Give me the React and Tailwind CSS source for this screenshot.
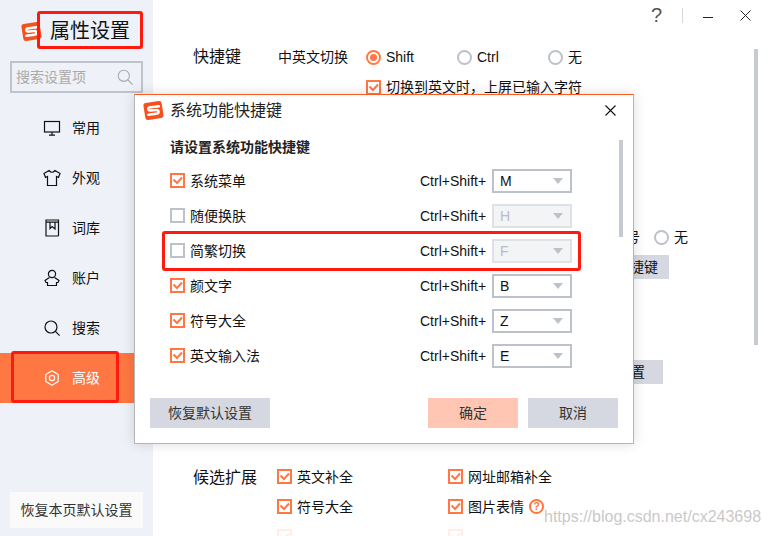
import React from 'react';

const NAV = [
  { label: '常用', icon: 'monitor' },
  { label: '外观', icon: 'shirt' },
  { label: '词库', icon: 'book' },
  { label: '账户', icon: 'user' },
  { label: '搜索', icon: 'search' },
  { label: '高级', icon: 'gear', active: true },
];

const SHORTCUTS = [
  { label: '系统菜单', key: 'M', on: true },
  { label: '随便换肤', key: 'H', on: false },
  { label: '简繁切换', key: 'F', on: false },
  { label: '颜文字', key: 'B', on: true },
  { label: '符号大全', key: 'Z', on: true },
  { label: '英文输入法', key: 'E', on: true },
];

const Logo = ({ className }) => (
  <svg viewBox="0 0 22 22" className={className}>
    <rect x="2.2" y="2.8" width="17.6" height="16.4" rx="2.6" transform="rotate(-9 11 11)" fill="#f4511e" />
    <path
      d="M16.2 7 L8.2 7.9 Q5.9 8.2 6 9.7 Q6.1 11.2 8.2 11 L13.2 10.6 Q15.8 10.5 15.9 12.2 Q16 13.8 13.7 14.1 L5.9 15"
      fill="none"
      stroke="#fff"
      strokeWidth="2.3"
      strokeLinecap="round"
    />
  </svg>
);

const NavIcon = ({ name, color }) => {
  const common = { fill: 'none', stroke: color, strokeWidth: 1.2 };
  return (
    <svg viewBox="0 0 18 18" className="w-[18px] h-[18px]" {...common}>
      {name === 'monitor' && (
        <>
          <rect x="1.5" y="2.5" width="15" height="10.5" />
          <path d="M9 13v3M6 16.2h6" />
        </>
      )}
      {name === 'shirt' && (
        <path d="M6 1.5 L1 4.5 L2.5 8.5 L4.5 7.5 V16.5 H13.5 V7.5 L15.5 8.5 L17 4.5 L12 1.5 Q9 5 6 1.5 Z" />
      )}
      {name === 'book' && (
        <>
          <path d="M15.5 17 H3 V1 H15.5 V17" />
          <path d="M3 3.2 H15.5 M7 3.2 V9.5 L9 7.5 L12 10 V3.2" />
        </>
      )}
      {name === 'user' && (
        <>
          <circle cx="9" cy="5" r="3.6" />
          <path d="M6.4 8.4 L2 11.5 L3 13.5 H4.5 V16.5 H13.5 V13.5 H15 L16 11.5 L11.6 8.4" />
        </>
      )}
      {name === 'search' && (
        <>
          <circle cx="8" cy="8" r="6" />
          <path d="M12.4 12.4 L16.6 16.6" />
        </>
      )}
      {name === 'gear' && (
        <>
          <path d="M9 1.8 L15.2 5.4 V12.6 L9 16.2 L2.8 12.6 V5.4 Z" strokeLinejoin="round" />
          <circle cx="9" cy="9" r="2.6" />
        </>
      )}
    </svg>
  );
};

const Check = ({ on, faded }) => (
  <span
    className={`inline-flex w-[15px] h-[15px] shrink-0 items-center justify-center border-2 ${
      on ? 'border-[#ff7743]' : 'border-[#bdc1c9]'
    } ${faded ? 'opacity-[0.12]' : ''}`}
  >
    {on && (
      <svg viewBox="0 0 11 11" className="w-[11px] h-[11px]">
        <path d="M1.5 4.5 L5 8 L10 2.5" fill="none" stroke="#ff7743" strokeWidth="2" />
      </svg>
    )}
  </span>
);

const Radio = ({ on }) => (
  <span
    className={`inline-flex w-[15px] h-[15px] shrink-0 items-center justify-center rounded-full border-2 ${
      on ? 'border-[#ff7743]' : 'border-[#bdc1c9]'
    }`}
  >
    {on && <span className="w-[7px] h-[7px] rounded-full bg-[#ff7743]" />}
  </span>
);

const ShortcutRow = ({ label, shortcut, on }) => (
  <div className="h-[35px] flex items-center text-sm text-[#111]">
    <Check on={on} />
    <span className="ml-[5px] w-[230px]">{label}</span>
    <span className="w-[72px]">Ctrl+Shift+</span>
    <div
      className={`w-20 h-6 flex items-center justify-between pl-[6px] pr-[7px] border-2 ${
        on ? 'border-[#bdc1c9] text-[#111]' : 'border-[#dfe1e5] bg-[#f3f4f6] text-[#b8bcc4]'
      }`}
    >
      <span>{shortcut}</span>
      <span className="w-0 h-0 border-x-[5.5px] border-x-transparent border-t-[6px] border-t-[#bdc1c9]" />
    </div>
  </div>
);

const Dialog = () => (
  <div className="absolute left-[134px] top-[94px] w-[500px] h-[350px] flex flex-col bg-white border border-[#b5b5b8] border-t-[#ff5a1f] shadow-[0_0_12px_rgba(0,0,0,0.14)]">
    <div className="h-[31px] flex items-center pl-[7px] pr-[17px]">
      <Logo className="w-[23px] h-[23px]" />
      <span className="ml-[5px] text-base text-[#222]">系统功能快捷键</span>
      <svg viewBox="0 0 11 11" className="ml-auto w-[11px] h-[11px]">
        <path d="M0.5 0.5 L10.5 10.5 M10.5 0.5 L0.5 10.5" stroke="#111" strokeWidth="1.1" />
      </svg>
    </div>
    <div className="relative flex-1 pl-[35px]">
      <div className="mt-[11px] h-5 leading-5 text-sm font-bold text-[#222]">请设置系统功能快捷键</div>
      <div className="mt-[6px]">
        {SHORTCUTS.map((s) => (
          <ShortcutRow key={s.label} label={s.label} shortcut={s.key} on={s.on} />
        ))}
      </div>
      <div className="absolute left-[484px] top-[14px] w-1 h-[97px] bg-[#c8cad2]" />
    </div>
    <div className="h-[45px] flex pl-[15px] pr-[15px] text-sm text-[#333]">
      <button className="w-[120px] h-[30px] bg-[#d5d8e0]">恢复默认设置</button>
      <button className="ml-auto w-[90px] h-[30px] bg-[#ffc7b3]">确定</button>
      <button className="ml-[10px] w-[90px] h-[30px] bg-[#d5d8e0]">取消</button>
    </div>
  </div>
);

export default function App() {
  return (
    <div className="relative w-[768px] h-[536px] overflow-hidden flex bg-white font-['Liberation_Sans','Noto_Sans_CJK_SC',sans-serif] text-[#111]">
      {/* sidebar */}
      <aside className="w-[153px] h-full flex flex-col bg-[#eef1f7]">
        <div className="h-[38px] mt-[12px] flex items-center pl-[20px]">
          <Logo className="w-[23px] h-[23px]" />
          <span className="ml-[7px] text-xl text-[#111]">属性设置</span>
        </div>
        <div className="mx-[10px] mt-[11px] h-8 flex items-center justify-between pl-[4px] pr-2 border-2 border-[#bfc3cc] text-sm text-[#aaa]">
          <span>搜索设置项</span>
          <svg viewBox="0 0 16 16" className="w-4 h-4" fill="none" stroke="#aaa" strokeWidth="1.1">
            <circle cx="6.8" cy="6.8" r="5.6" />
            <path d="M10.8 10.8 L15.5 15.5" />
          </svg>
        </div>
        <nav className="mt-[10px]">
          {NAV.map((n) => (
            <div
              key={n.label}
              className={`h-[50px] flex items-center pl-[43px] text-sm ${
                n.active ? 'bg-[#ff7743] text-white' : 'text-[#111]'
              }`}
            >
              <NavIcon name={n.icon} color={n.active ? '#fff' : '#111'} />
              <span className="ml-[11px]">{n.label}</span>
            </div>
          ))}
        </nav>
        <button className="mx-[10px] mt-auto mb-2 h-9 bg-[#fafafa] text-sm text-[#333]">恢复本页默认设置</button>
      </aside>

      {/* settings page behind the dialog */}
      <main className="flex-1 h-full overflow-hidden flex flex-col pl-10 text-sm">
        <div className="shrink-0 h-[30px] flex items-center justify-end pr-[17px]">
          <span className="text-xl text-[#555]">?</span>
          <span className="ml-[20px] w-px h-[15px] bg-[#d5d8e0]" />
          <span className="ml-[20px] w-[10px] h-px mt-1 bg-[#222]" />
          <svg viewBox="0 0 11 11" className="ml-[27px] w-[11px] h-[11px]">
            <path d="M0.5 0.5 L10.5 10.5 M10.5 0.5 L0.5 10.5" stroke="#222" strokeWidth="1" />
          </svg>
        </div>
        <div className="shrink-0 mt-[17px] h-5 flex items-center">
          <span className="w-[85px] text-base">快捷键</span>
          <span className="w-[88px]">中英文切换</span>
          <div className="w-[91px] flex items-center gap-[5px]"><Radio on />Shift</div>
          <div className="w-[91px] flex items-center gap-[5px]"><Radio />Ctrl</div>
          <div className="flex items-center gap-[5px]"><Radio />无</div>
        </div>
        <div className="shrink-0 mt-[10px] ml-[173px] flex items-center gap-[5px]">
          <Check on />
          切换到英文时，上屏已输入字符
        </div>
        <div className="shrink-0 mt-[130px] h-5 flex items-center justify-end pr-[80px]">
          <span>符号</span>
          <span className="ml-[14px] mr-[5px] flex"><Radio /></span>
          无
        </div>
        <button className="shrink-0 mt-2 ml-[356px] w-[120px] h-6 bg-[#d5d8e0] text-right pr-[11px]">系统功能快捷键</button>
        <button className="shrink-0 mt-[81px] ml-[356px] w-[114px] h-6 bg-[#d5d8e0] text-right pr-[18px]">自定义设置</button>
        <div className="shrink-0 mt-[85px] flex">
          <span className="w-[84px] text-base leading-[18px]">候选扩展</span>
          <div className="w-[171px] flex flex-col gap-[15px]">
            <div className="flex items-center gap-[5px] h-[15px]"><Check on />英文补全</div>
            <div className="flex items-center gap-[5px] h-[15px]"><Check on />符号大全</div>
            <Check on faded />
          </div>
          <div className="flex flex-col gap-[15px]">
            <div className="flex items-center gap-[5px] h-[15px]"><Check on />网址邮箱补全</div>
            <div className="flex items-center gap-[5px] h-[15px]">
              <Check on />
              图片表情
              <span className="w-[15px] h-[15px] rounded-full border-2 border-[#ff7743] text-[#ff7743] text-[11px] font-bold leading-[11px] text-center">?</span>
            </div>
            <Check on faded />
          </div>
        </div>
      </main>

      {/* main page scrollbar */}
      <div className="absolute left-[754px] top-[49px] w-1 h-[296px] bg-[#c8cad2]" />

      <Dialog />

      {/* red annotation boxes */}
      <div className="absolute left-[37px] top-[11px] w-[106px] h-[38px] border-[3px] border-[#ff1a0f] rounded-[3px] bg-[#eef1f7]/0" />
      <div className="absolute left-[11px] top-[351px] w-[108px] h-[52px] border-[3px] border-[#ff1a0f] rounded-[3px]" />
      <div className="absolute left-[162px] top-[231px] w-[419px] h-[40px] border-[3px] border-[#ff1a0f] rounded-[3px]" />

      {/* watermark */}
      <div className="absolute left-[544px] top-[506px] text-base leading-[22px] text-[#c9c9c9] [text-shadow:0_0_2px_#fff]">https://blog.csdn.net/cx243698</div>
    </div>
  );
}
